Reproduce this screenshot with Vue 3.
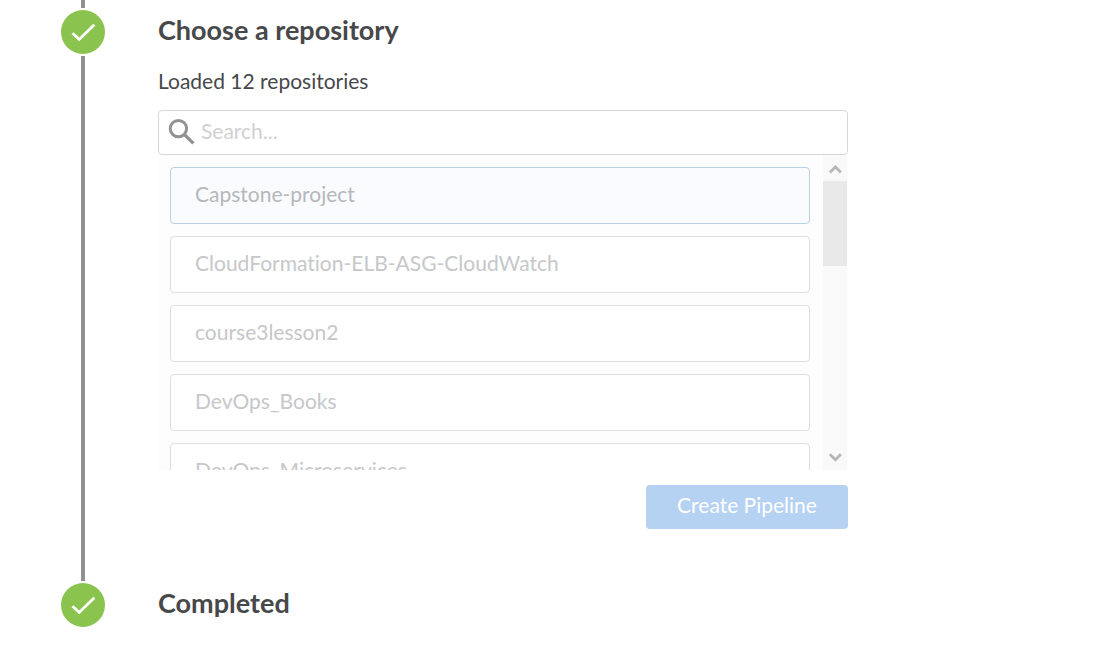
<script setup>
const repositories = [
  { name: 'Capstone-project', selected: true },
  { name: 'CloudFormation-ELB-ASG-CloudWatch', selected: false },
  { name: 'course3lesson2', selected: false },
  { name: 'DevOps_Books', selected: false },
  { name: 'DevOps_Microservices', selected: false },
]
</script>

<template>
  <main class="wizard">
    <div class="rail">
      <span class="line lead"></span>
      <span class="badge">
        <svg width="44" height="44" viewBox="0 0 44 44"><path d="M11.5 23.2 18.2 29.4 33.3 14.8" /></svg>
      </span>
      <span class="line"></span>
      <span class="badge">
        <svg width="44" height="44" viewBox="0 0 44 44"><path d="M11.5 23.2 18.2 29.4 33.3 14.8" /></svg>
      </span>
    </div>

    <div class="steps">
      <section class="step">
        <h2><span>Choose a repository</span></h2>
        <p class="status"><span>Loaded 12 repositories</span></p>
        <div class="search">
          <svg class="lens" width="28" height="28" viewBox="0 0 28 28">
            <circle cx="11.4" cy="10.6" r="8.2" />
            <path d="M17.2 16.4 26.4 25.4" />
          </svg>
          <span class="placeholder">Search...</span>
        </div>
        <div class="list">
          <ul>
            <li v-for="repo in repositories" :key="repo.name" :class="{ selected: repo.selected }">
              <span>{{ repo.name }}</span>
            </li>
          </ul>
          <div class="scrollbar">
            <svg width="24" height="26" viewBox="0 0 24 26"><path d="M6.9 17.5 12.4 12 17.9 17.5" /></svg>
            <span class="thumb"></span>
            <svg class="down" width="24" height="26" viewBox="0 0 24 26"><path d="M6.9 10.3 12.4 15.8 17.9 10.3" /></svg>
          </div>
        </div>
        <button type="button"><span>Create Pipeline</span></button>
      </section>
      <h2><span>Completed</span></h2>
    </div>
  </main>
</template>

<style>
body {
  background: #fff;
  overflow: hidden;
}
</style>

<style scoped>
.wizard {
  display: flex;
  height: 661px;
  overflow: hidden;
  box-sizing: border-box;
  padding-left: 61px;
  font-family: Lato, "Open Sans", sans-serif;
  font-size: 21px;
  font-variant-ligatures: none;
  color: #47484a;
}
.rail {
  width: 44px;
  display: flex;
  flex-direction: column;
  align-items: center;
}
.line {
  width: 4px;
  height: 525px;
  margin: 2px 0;
  background: #919191;
}
.lead {
  height: 8px;
  margin-top: 0;
}
.badge {
  width: 44px;
  height: 44px;
  border-radius: 50%;
  background: #8bc34f;
}
svg {
  display: block;
  fill: none;
}
.badge path {
  stroke: #fff;
  stroke-width: 2.8;
}
.steps {
  width: 690px;
  margin-left: 53px;
}
.step {
  height: 573px;
}
h2 {
  margin: 0;
  height: 62px;
  line-height: 60px;
  font-size: 27px;
  font-weight: 700;
}
.status {
  margin: 0;
  height: 48px;
  line-height: 37px;
}
.search {
  box-sizing: border-box;
  height: 45px;
  display: flex;
  align-items: center;
  padding: 0 0 2px 8px;
  border: 1px solid #d5d6d8;
  border-radius: 4px;
  color: #d0d0d3;
}
.placeholder {
  padding-bottom: 2px;
}
.lens {
  margin-right: 6px;
  stroke: #929294;
  stroke-width: 3;
}
.lens path {
  stroke-width: 3.4;
}
.list {
  display: flex;
  height: 315px;
  overflow: hidden;
  background: #fdfdfe;
}
ul {
  list-style: none;
  margin: 0;
  padding: 12px 13px 0 12px;
  width: 640px;
}
li {
  box-sizing: border-box;
  height: 57px;
  line-height: 52px;
  margin-bottom: 12px;
  padding-left: 24px;
  border: 1px solid #dedfe3;
  border-radius: 4px;
  background: #fff;
  color: #c6c7ca;
}
li.selected {
  border-color: #b8d0e0;
  background: #f9fbff;
  color: #b5b7bb;
}
.scrollbar {
  width: 24px;
  height: 315px;
  display: flex;
  flex-direction: column;
  background: #f9f9f9;
}
.scrollbar path {
  stroke: #b7b7b7;
  stroke-width: 2.8;
}
.thumb {
  height: 85px;
  background: #e9e9e9;
}
.down {
  margin-top: auto;
}
button {
  display: block;
  width: 202px;
  height: 44px;
  margin: 15px 0 0 auto;
  padding: 0 0 5px;
  border: 0;
  border-radius: 4px;
  background: #b5d2f2;
  color: #fff;
  font: inherit;
  font-variant-ligatures: none;
}
</style>
